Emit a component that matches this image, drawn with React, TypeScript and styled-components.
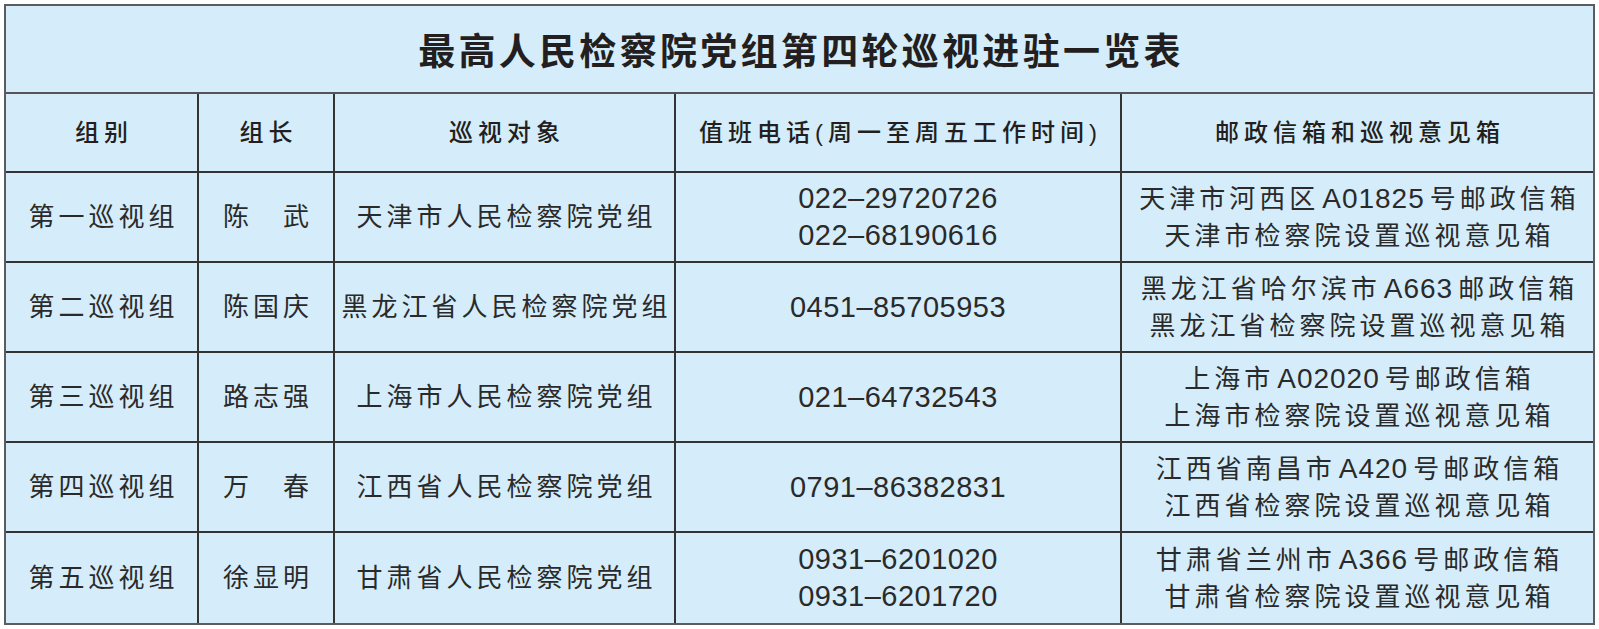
import React from 'react'
import styled, { createGlobalStyle } from 'styled-components'

const GlobalStyle = createGlobalStyle`
    * {
        box-sizing: border-box;
    }

    body {
        margin: 0;
        background: #ffffff;
        font-family: 'Liberation Sans', 'Noto Sans CJK SC', sans-serif;
        color: #231f20;
    }
`

const StyledSheet = styled.div`
    margin: 4px 0 0 4px;
    width: 1591px;
    border: 2px solid #5c5c5c;
    background: #d5edfa;
`

const StyledTitle = styled.h1`
    margin: 0;
    height: 88px;
    display: flex;
    align-items: center;
    justify-content: center;
    padding-left: 3px;
    border-bottom: 2px solid #555555;
    font-family: 'Noto Sans CJK SC', sans-serif;
    font-size: 37px;
    font-weight: 700;
    letter-spacing: 3.3px;
`

const StyledGrid = styled.div`
    display: grid;
    grid-template-columns: 193px 136px 341px 446px 471px;
    grid-template-rows: 79px repeat(5, 90px);
`

const StyledCell = styled.div<{ $lastColumn?: boolean; $lastRow?: boolean }>`
    display: flex;
    flex-direction: column;
    align-items: center;
    justify-content: center;
    text-align: center;
    white-space: nowrap;
    padding-left: 4px;
    border-right: ${({ $lastColumn }) => ($lastColumn ? 'none' : '2px solid #333333')};
    border-bottom: ${({ $lastRow }) => ($lastRow ? 'none' : '2px solid #333333')};
    font-size: 26px;
    font-weight: 400;
    letter-spacing: 4px;
    line-height: 37px;
    color: #2a2a2a;
`

const StyledHeadCell = styled(StyledCell)`
    padding-left: 5px;
    font-size: 24px;
    font-weight: 500;
    letter-spacing: 5px;
    color: #231f20;
`

const StyledPhone = styled.span`
    display: block;
    padding-right: 4px;
    font-family: 'Liberation Sans', sans-serif;
    font-size: 29px;
    letter-spacing: 0.5px;
`

const StyledLine = styled.span`
    display: block;
`

const StyledCode = styled.span`
    font-family: 'Liberation Sans', sans-serif;
    font-size: 28px;
    letter-spacing: 1px;
    margin: 0 5px 0 3px;
`

type Mailbox = { place: string; code: string; suffix: string; opinion: string }

type Group = {
    name: string
    leader: string
    target: string
    phones: string[]
    mailbox: Mailbox
}

const headers = ['组别', '组长', '巡视对象', '值班电话(周一至周五工作时间)', '邮政信箱和巡视意见箱']

const groups: Group[] = [
    {
        name: '第一巡视组',
        leader: '陈　武',
        target: '天津市人民检察院党组',
        phones: ['022–29720726', '022–68190616'],
        mailbox: { place: '天津市河西区', code: 'A01825', suffix: '号邮政信箱', opinion: '天津市检察院设置巡视意见箱' },
    },
    {
        name: '第二巡视组',
        leader: '陈国庆',
        target: '黑龙江省人民检察院党组',
        phones: ['0451–85705953'],
        mailbox: { place: '黑龙江省哈尔滨市', code: 'A663', suffix: '邮政信箱', opinion: '黑龙江省检察院设置巡视意见箱' },
    },
    {
        name: '第三巡视组',
        leader: '路志强',
        target: '上海市人民检察院党组',
        phones: ['021–64732543'],
        mailbox: { place: '上海市', code: 'A02020', suffix: '号邮政信箱', opinion: '上海市检察院设置巡视意见箱' },
    },
    {
        name: '第四巡视组',
        leader: '万　春',
        target: '江西省人民检察院党组',
        phones: ['0791–86382831'],
        mailbox: { place: '江西省南昌市', code: 'A420', suffix: '号邮政信箱', opinion: '江西省检察院设置巡视意见箱' },
    },
    {
        name: '第五巡视组',
        leader: '徐显明',
        target: '甘肃省人民检察院党组',
        phones: ['0931–6201020', '0931–6201720'],
        mailbox: { place: '甘肃省兰州市', code: 'A366', suffix: '号邮政信箱', opinion: '甘肃省检察院设置巡视意见箱' },
    },
]

const App: React.FC = () => {
    return (
        <>
            <GlobalStyle />
            <StyledSheet>
                <StyledTitle>最高人民检察院党组第四轮巡视进驻一览表</StyledTitle>
                <StyledGrid>
                    {headers.map((text, index) => (
                        <StyledHeadCell key={text} $lastColumn={index === headers.length - 1}>
                            {text}
                        </StyledHeadCell>
                    ))}
                    {groups.map((group, rowIndex) => {
                        const lastRow = rowIndex === groups.length - 1
                        return (
                            <React.Fragment key={group.name}>
                                <StyledCell $lastRow={lastRow}>{group.name}</StyledCell>
                                <StyledCell $lastRow={lastRow}>{group.leader}</StyledCell>
                                <StyledCell $lastRow={lastRow}>{group.target}</StyledCell>
                                <StyledCell $lastRow={lastRow}>
                                    {group.phones.map((phone) => (
                                        <StyledPhone key={phone}>{phone}</StyledPhone>
                                    ))}
                                </StyledCell>
                                <StyledCell $lastRow={lastRow} $lastColumn>
                                    <StyledLine>
                                        {group.mailbox.place}
                                        <StyledCode>{group.mailbox.code}</StyledCode>
                                        {group.mailbox.suffix}
                                    </StyledLine>
                                    <StyledLine>{group.mailbox.opinion}</StyledLine>
                                </StyledCell>
                            </React.Fragment>
                        )
                    })}
                </StyledGrid>
            </StyledSheet>
        </>
    )
}

export default App
